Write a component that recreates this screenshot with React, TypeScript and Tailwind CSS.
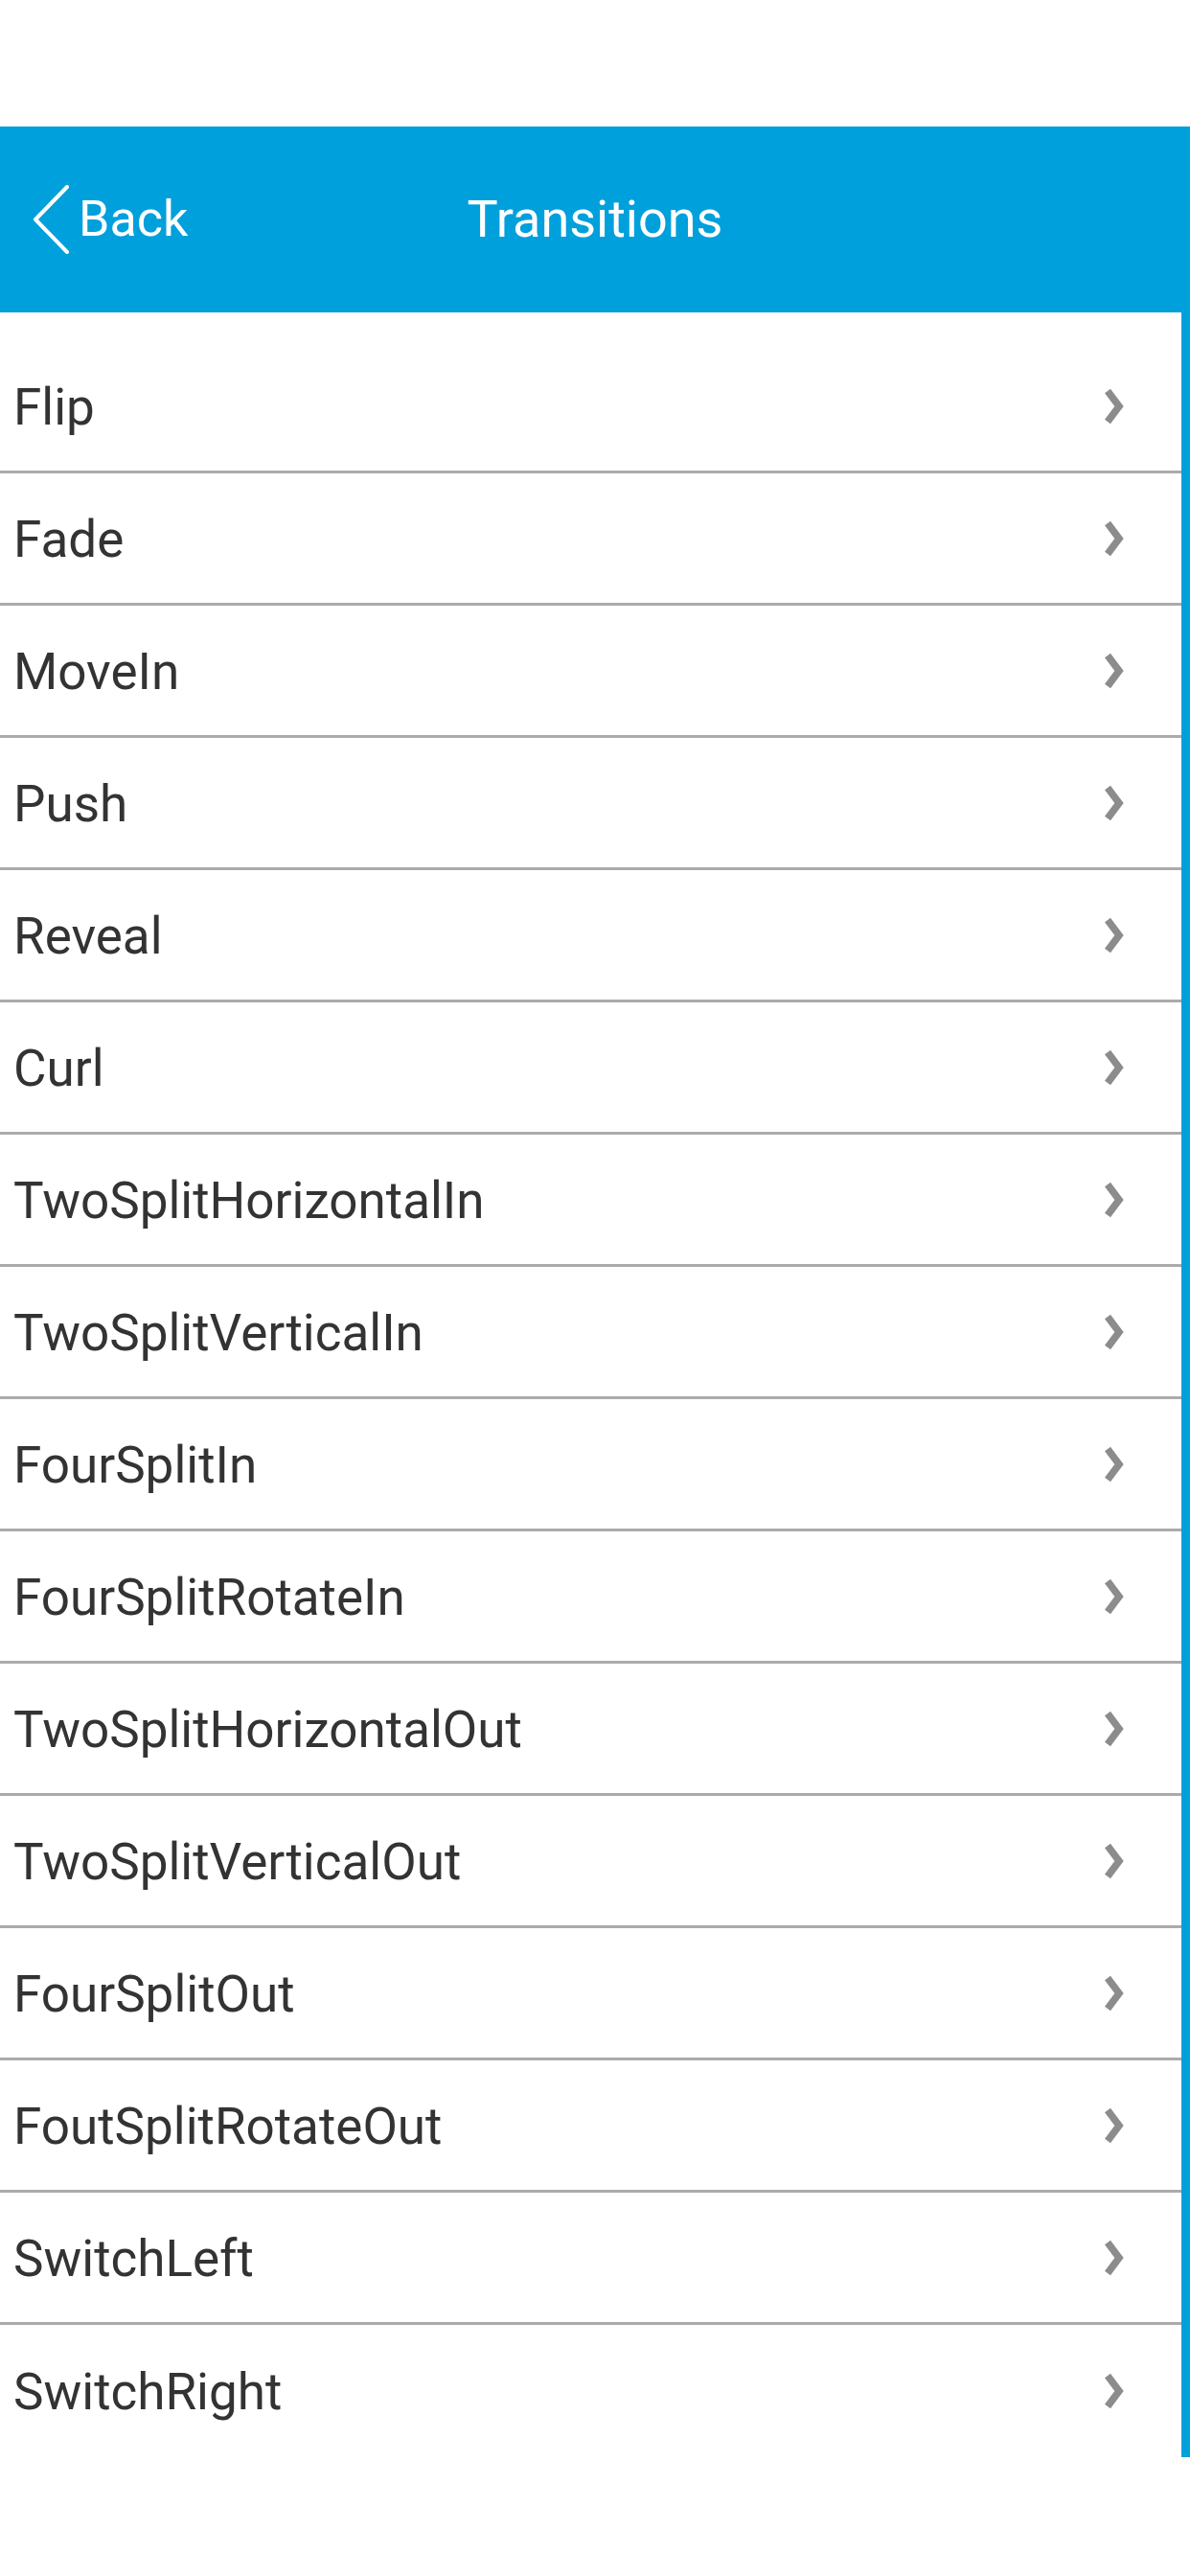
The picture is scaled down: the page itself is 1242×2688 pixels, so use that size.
import React from 'react';

const transitions: string[] = [
  'Flip',
  'Fade',
  'MoveIn',
  'Push',
  'Reveal',
  'Curl',
  'TwoSplitHorizontalIn',
  'TwoSplitVerticalIn',
  'FourSplitIn',
  'FourSplitRotateIn',
  'TwoSplitHorizontalOut',
  'TwoSplitVerticalOut',
  'FourSplitOut',
  'FoutSplitRotateOut',
  'SwitchLeft',
  'SwitchRight'
];

const Chevron: React.FC = () => (
  <svg width="22" height="42" viewBox="0 0 22 42" className="shrink-0">
    <polyline
      points="4,5 16,21 4,37"
      fill="none"
      stroke="#8c8c8c"
      strokeWidth="7.5"
      strokeLinejoin="miter"
    />
  </svg>
);

const App: React.FC = () => {
  return (
    <div className="w-[1242px] h-[2688px] bg-white pt-[132px] font-['Roboto',sans-serif]">
      {/* Header */}
      <div className="relative h-[194px] bg-[#00a0dc] flex items-center justify-center">
        <div className="absolute left-[33px] top-0 h-full flex items-center">
          <svg width="40" height="72" viewBox="0 0 40 72">
            <polyline
              points="37,2 4,36 37,70"
              fill="none"
              stroke="#ffffff"
              strokeWidth="4"
              strokeLinecap="round"
              strokeLinejoin="round"
            />
          </svg>
          <span className="ml-[9px] text-white text-[52px] leading-none">Back</span>
        </div>
        <span className="text-white text-[54px] leading-none">Transitions</span>
      </div>

      {/* List */}
      <div className="flex">
        <div className="flex-1 pt-[30px]">
          {transitions.map((name, i) => (
            <div
              key={name}
              className={`h-[138px] flex items-center pl-[14px] pr-[59px] ${
                i < transitions.length - 1 ? 'border-b-[3px] border-[#ababab]' : ''
              }`}
            >
              <span className="flex-1 pt-[3px] text-[53px] text-[#333333] leading-none">{name}</span>
              <Chevron />
            </div>
          ))}
        </div>
        <div className="w-[9px] bg-[#00a0dc]" />
      </div>
    </div>
  );
};

export default App;
